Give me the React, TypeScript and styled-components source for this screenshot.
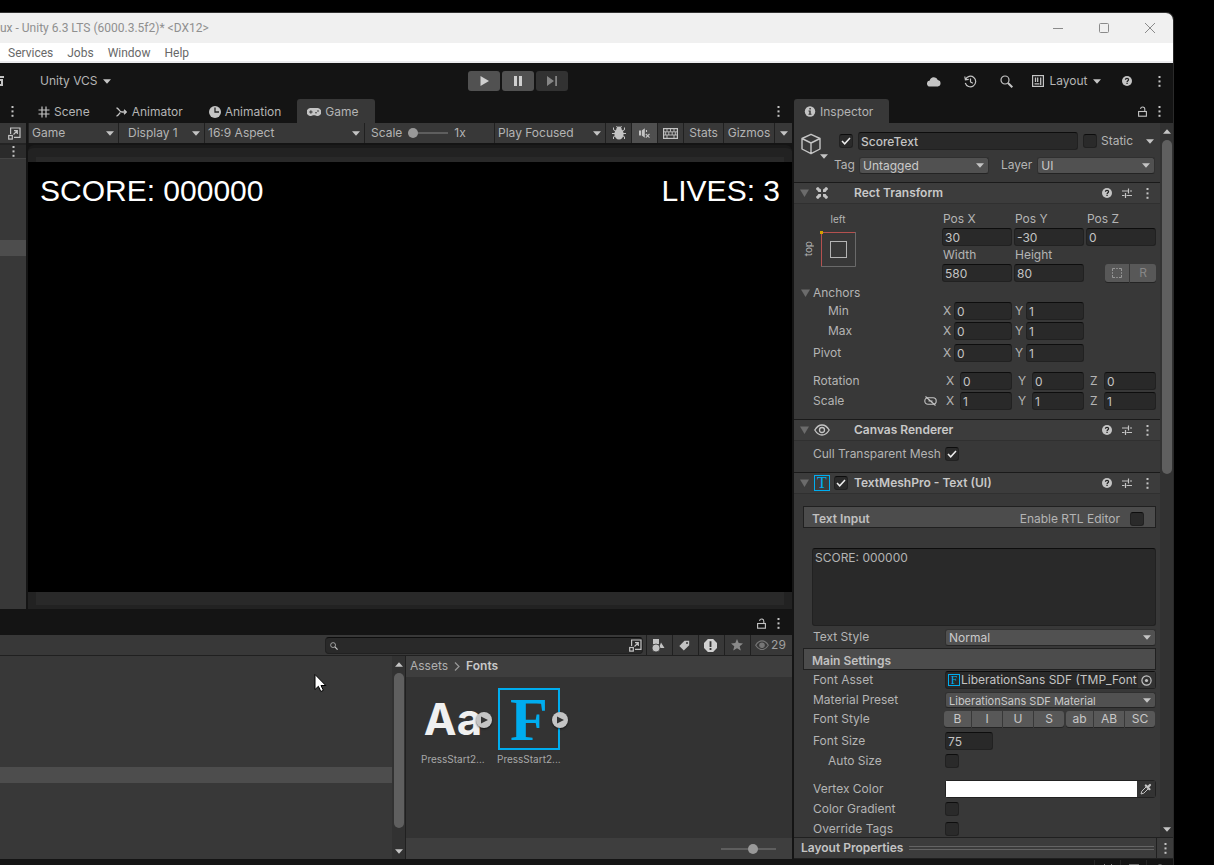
import React from "react";
import styled, { createGlobalStyle, css } from "styled-components";

const Global = createGlobalStyle`
  *, *::before, *::after { box-sizing: border-box; }
  html, body { margin: 0; background: #000; }
  body { font: 12px/16px Inter, "Liberation Sans", sans-serif; color: #b4b4b4; overflow: hidden; }
  button, input, select, textarea { font: inherit; color: inherit; margin: 0; border-radius: 0; }
  svg { display: block; flex: none; }
`;

const C = {
  chrome: "#141414",
  panel: "#383838",
  header: "#3c3c3c",
  field: "#292929",
  line: "#202020",
  button: "#515151",
  blue: "#00adef",
};

/* ---------- window ---------- */

const Desktop = styled.div`
  height: 100vh;
  padding: 12px 40px 0 0;
  display: flex;
`;
const Window = styled.div`
  flex: 1;
  min-width: 0;
  display: flex;
  flex-direction: column;
  border-top: 1px solid #333;
  border-right: 1px solid #2a2a2a;
  border-radius: 0 8px 0 0;
  overflow: hidden;
  background: ${C.chrome};
`;
const TitleBar = styled.header`
  flex: none;
  height: 30px;
  display: flex;
  align-items: center;
  justify-content: space-between;
  background: #f0f0f0;
  color: #8f8f8f;
  font: 12px/16px Roboto, "Noto Sans", sans-serif;
`;
const WindowButtons = styled.div`
  display: flex;
`;
const WindowButton = styled.button`
  width: 46px;
  height: 30px;
  padding: 0;
  display: grid;
  place-items: center;
  border: 0;
  background: none;
`;
const MenuBar = styled.nav`
  flex: none;
  height: 20px;
  padding: 1px 0 0 8px;
  display: flex;
  align-items: center;
  gap: 14px;
  background: #fff;
  border-bottom: 2px solid #ececee;
  font: 12px/16px Roboto, "Noto Sans", sans-serif;
`;
const MenuLink = styled.a`
  color: #686868;
  text-decoration: none;
`;
const Toolbar = styled.div`
  flex: none;
  height: 36px;
  display: grid;
  grid-template-columns: 468px auto 1fr;
  align-items: center;
`;
const ToolbarLeft = styled.div`
  display: flex;
  align-items: center;
  gap: 36px;
`;
const ToolbarRight = styled.div`
  display: flex;
  justify-content: flex-end;
`;
const ToolButton = styled.button<{ $w?: number }>`
  height: 24px;
  width: ${(p) => (p.$w ? `${p.$w}px` : "auto")};
  padding: 0;
  display: flex;
  align-items: center;
  justify-content: center;
  gap: 5px;
  border: 0;
  background: none;
`;
const PlayGroup = styled.div`
  display: flex;
  gap: 2px;
`;
const PlayButton = styled.button<{ $dim?: boolean }>`
  width: 32px;
  height: 20px;
  padding: 0;
  display: grid;
  place-items: center;
  border: 0;
  border-radius: 3px;
  background: ${(p) => (p.$dim ? "#323232" : C.button)};
`;

/* ---------- docks ---------- */

const Body = styled.div`
  flex: 1;
  min-height: 0;
  display: grid;
  grid-template-columns: minmax(0, 1fr) 379px;
  grid-template-rows: minmax(0, 1fr);
`;
const LeftSide = styled.div`
  display: flex;
  flex-direction: column;
  min-height: 0;
  margin-right: 2px;
`;
const TopDocks = styled.div`
  flex: 1;
  min-height: 0;
  display: grid;
  grid-template-columns: 26px minmax(0, 1fr);
  gap: 2px;
`;
const Dock = styled.section`
  min-width: 0;
  min-height: 0;
  display: flex;
  flex-direction: column;
`;
const TabBar = styled.div`
  flex: none;
  height: 24px;
  display: flex;
`;
const Tab = styled.button<{ $active?: boolean }>`
  height: 24px;
  padding: 1px 16px 0 10px;
  display: flex;
  align-items: center;
  gap: 4px;
  border: 0;
  border-radius: 3px 3px 0 0;
  background: ${(p) => (p.$active ? C.panel : "none")};
`;
const TabTools = styled.div`
  margin-left: auto;
  padding-right: 12px;
  display: flex;
  align-items: center;
  gap: 11px;
`;
const IconButton = styled.button`
  padding: 0;
  border: 0;
  background: none;
  display: grid;
  place-items: center;
`;

/* hierarchy strip */
const HierarchyTools = styled.div`
  flex: none;
  height: 22px;
  display: flex;
  align-items: center;
  justify-content: flex-end;
  padding-right: 5px;
  background: ${C.panel};
  border-bottom: 2px solid #232323;
`;
const HierarchyHeader = styled.div`
  flex: none;
  height: 14px;
  display: flex;
  align-items: center;
  justify-content: flex-end;
  padding-right: 11px;
  background: #2b2b2b;
  border-bottom: 1px solid #444;
`;
const HierarchyList = styled.div`
  flex: 1;
  padding-top: 81px;
  background: ${C.panel};
`;
const SelectedRow = styled.div`
  height: 16px;
  background: #4d4d4d;
`;

/* game view */
const GameTools = styled.div`
  flex: none;
  height: 20px;
  display: flex;
  padding-left: 1px;
  background: ${C.line};
  gap: 1px;
`;
const toolCell = css`
  height: 20px;
  background: ${C.panel};
  display: flex;
  align-items: center;
`;
const ScaleCell = styled.label`
  ${toolCell}
  flex: 1;
  padding-left: 6px;
  gap: 6px;
`;
const ToolCell = styled.button<{ $w: number; $on?: boolean }>`
  ${toolCell}
  justify-content: center;
  flex: none;
  width: ${(p) => p.$w}px;
  padding: 0;
  border: 0;
  background: ${(p) => (p.$on ? "#4f4f4f" : C.panel)};
`;
const GameFrame = styled.div`
  flex: 1;
  min-height: 0;
  margin-top: 2px;
  padding: 9px 0 4px;
  display: flex;
  flex-direction: column;
  background: #222;
  border-top: 3px solid #1a1a1a;
  border-radius: 6px 6px 0 0;
`;
const GameRail = styled.div<{ $h: number }>`
  flex: none;
  height: ${(p) => p.$h}px;
  margin: 0 8px;
  background: #292929;
`;
const GameScreen = styled.div`
  flex: 1;
  padding: 10px 12px;
  display: flex;
  justify-content: space-between;
  background: #000;
  color: #fff;
  font: 30px/38px "Liberation Sans", Arial, sans-serif;
`;

/* ---------- form parts ---------- */

const SelectBox = styled.span<{ $w?: number; $flat?: boolean; $h?: number; $pad?: number; $small?: boolean }>`
  display: grid;
  align-items: center;
  width: ${(p) => (p.$w ? `${p.$w}px` : "auto")};
  flex: ${(p) => (p.$w ? "none" : "1")};
  min-width: 0;
  > * { grid-area: 1 / 1; }
  > svg { justify-self: end; margin-right: ${(p) => (p.$flat ? 4 : 5)}px; pointer-events: none; }
  > select {
    appearance: none;
    width: 100%;
    min-width: 0;
    height: ${(p) => p.$h ?? 17}px;
    padding: 0 14px 0 ${(p) => p.$pad ?? 3}px;
    border: 0;
    background: ${(p) => (p.$flat ? C.panel : C.button)};
    font-size: ${(p) => (p.$small ? 11 : 12)}px;
    ${(p) => !p.$flat && css`
      border-radius: 3px;
      border: 1px solid #303030;
      border-bottom-color: #242424;
      color: #cacaca;
    `}
  }
`;
const CheckBox = styled.span`
  display: grid;
  flex: none;
  width: 14px;
  height: 14px;
  > * { grid-area: 1 / 1; }
  > input {
    appearance: none;
    width: 14px;
    height: 14px;
    border: 1px solid #212121;
    border-top-color: #0d0d0d;
    border-radius: 3px;
    background: #2a2a2a;
  }
  > svg { pointer-events: none; visibility: hidden; place-self: center; }
  > input:checked + svg { visibility: visible; }
`;
const TextField = styled.input<{ $w?: number }>`
  width: ${(p) => (p.$w ? `${p.$w}px` : "auto")};
  flex: ${(p) => (p.$w ? "none" : "1")};
  min-width: 0;
  height: 18px;
  padding: 0 2px;
  border: 1px solid #212121;
  border-top-color: #0d0d0d;
  border-radius: 3px;
  background: ${C.field};
  color: #c4c4c4;
`;
const NameField = styled(TextField)`
  font-weight: 500;
`;
const RangeInput = styled.input<{ $w: number; $thumb: number }>`
  appearance: none;
  width: ${(p) => p.$w}px;
  height: 12px;
  background: linear-gradient(#5e5e5e, #5e5e5e) center / 100% 2px no-repeat;
  &::-webkit-slider-thumb {
    appearance: none;
    width: ${(p) => p.$thumb}px;
    height: ${(p) => p.$thumb}px;
    border-radius: 50%;
    background: #999;
  }
`;

/* ---------- project dock ---------- */

const Project = styled.section`
  flex: none;
  height: 250px;
  display: flex;
  flex-direction: column;
`;
const ProjectTabs = styled.div`
  flex: none;
  height: 26px;
  padding-top: 2px;
  display: flex;
`;
const ProjectTools = styled.div`
  flex: none;
  height: 21px;
  display: flex;
  justify-content: flex-end;
  align-items: stretch;
  gap: 1px;
  background: ${C.panel};
  border-bottom: 1px solid ${C.line};
`;
const SearchBox = styled.label`
  width: 318px;
  height: 17px;
  margin: 2px 3px 0 0;
  padding-left: 4px;
  display: flex;
  align-items: center;
  border: 1px solid #212121;
  border-top-color: #0d0d0d;
  border-radius: 4px;
  background: ${C.field};
`;
const SearchInput = styled.input`
  flex: 1;
  min-width: 0;
  padding: 0 4px;
  border: 0;
  outline: 0;
  background: none;
`;
const ProjectTool = styled.button<{ $w: number }>`
  width: ${(p) => p.$w}px;
  padding: 0 2px 0 0;
  display: flex;
  align-items: center;
  justify-content: center;
  gap: 2px;
  border: 0;
  background: ${C.panel};
  box-shadow: -1px 0 ${C.line};
  color: #a0a0a0;
`;
const ProjectBody = styled.div`
  flex: 1;
  min-height: 0;
  display: grid;
  grid-template-columns: 406px minmax(0, 1fr);
`;
const Tree = styled.div`
  position: relative;
  display: flex;
  background: ${C.panel};
  border-right: 1px solid ${C.line};
`;
const TreeRows = styled.div`
  flex: 1;
  padding-top: 111px;
`;
const Pointer = styled.div`
  position: absolute;
  left: 314px;
  top: 17px;
`;
const ScrollBar = styled.div`
  flex: none;
  width: 13px;
  padding: 6px 0 5px;
  display: flex;
  flex-direction: column;
  align-items: center;
  gap: 6px;
  background: #323232;
`;
const ScrollTrack = styled.div`
  flex: 1;
  width: 10px;
`;
const ScrollThumb = styled.div<{ $h: string }>`
  height: ${(p) => p.$h};
  border-radius: 5px;
  background: #5f5f5f;
`;
const Assets = styled.div`
  display: flex;
  flex-direction: column;
  background: #333;
`;
const Breadcrumb = styled.nav`
  flex: none;
  height: 21px;
  padding: 0 0 1px 4px;
  display: flex;
  align-items: center;
  gap: 6px;
  background: #3e3e3e;
`;
const Crumb = styled.a<{ $current?: boolean }>`
  color: ${(p) => (p.$current ? "#c8c8c8" : "#b0b0b0")};
  font-weight: ${(p) => (p.$current ? 600 : 400)};
  text-decoration: none;
`;
const AssetGrid = styled.div`
  flex: 1;
  padding: 11px 15px;
  display: flex;
  gap: 12px;
`;
const AssetTile = styled.div`
  width: 64px;
  color: #a8a8a8;
  font-size: 10px;
  line-height: 14px;
`;
const Thumb = styled.div<{ $framed?: boolean }>`
  position: relative;
  width: 62px;
  height: 62px;
  margin: 0 1px 2px;
  display: grid;
  place-items: center;
  ${(p) => p.$framed
    ? css`
      box-shadow: inset 0 0 0 2px ${C.blue};
      color: ${C.blue};
      font: bold 62px/62px "Liberation Serif", serif;
    `
    : css`
      color: #f0f0f0;
      font: bold 44px/62px Inter, sans-serif;
    `}
`;
const ExpandBadge = styled.button`
  position: absolute;
  right: -8px;
  top: 24px;
  width: 16px;
  height: 16px;
  padding: 0 0 0 1px;
  display: grid;
  place-items: center;
  border: 0;
  border-radius: 50%;
  background: #c4c4c4;
  box-shadow: 0 1px 2px rgba(0, 0, 0, 0.6);
`;
const AssetsFooter = styled.div`
  flex: none;
  height: 21px;
  padding-right: 16px;
  display: flex;
  align-items: center;
  justify-content: flex-end;
  background: #3e3e3e;
`;

/* ---------- inspector ---------- */

const InspectorMain = styled.div`
  flex: 1;
  min-height: 0;
  display: flex;
  background: ${C.panel};
`;
const InspectorScroll = styled.div`
  flex: 1;
  min-width: 0;
  overflow: hidden;
`;
const ObjectHeader = styled.div`
  height: 59px;
  padding: 9px 5px 0 7px;
  display: flex;
`;
const ObjectIcon = styled.div`
  width: 33px;
  flex: none;
  padding-top: 1px;
  display: flex;
  align-items: flex-start;
`;
const ObjectCaret = styled.span`
  margin: 21px 0 0 -1px;
`;
const ObjectRows = styled.div`
  flex: 1;
  min-width: 0;
  display: flex;
  flex-direction: column;
  gap: 6px;
`;
const ObjectLine = styled.div<{ $indent?: boolean }>`
  height: 18px;
  display: flex;
  align-items: center;
  gap: 5px;
  padding-left: ${(p) => (p.$indent ? 5 : 0)}px;
`;
const TagField = styled.span`
  margin-right: 7px;
  display: flex;
  align-items: center;
  gap: 4px;
`;
const StaticGroup = styled.span`
  width: 72px;
  display: flex;
  align-items: center;
  gap: 4px;
  > svg { margin: 0 1px 0 auto; }
`;
const ComponentHeader = styled.header`
  height: 22px;
  padding: 0 3px 0 6px;
  display: flex;
  align-items: center;
  background: ${C.header};
  border-top: 1px solid #1a1a1a;
  border-bottom: 1px solid #303030;
`;
const HeaderIcon = styled.span`
  width: 20px;
  margin-left: 3px;
  display: grid;
  justify-content: center;
`;
const HeaderCheck = styled.span`
  width: 22px;
  height: 14px;
  padding-left: 2px;
`;
const HeaderTitle = styled.h2`
  margin: 0;
  flex: 1;
  font-size: 12px;
  font-weight: 600;
  line-height: 16px;
  color: #c8c8c8;
`;
const HeaderTools = styled.span`
  display: grid;
  grid-template-columns: 20px 20px 20px;
`;
const ComponentBody = styled.div<{ $pad: string }>`
  padding: ${(p) => p.$pad};
`;
const RectTop = styled.div`
  margin-bottom: 2px;
  display: flex;
  justify-content: space-between;
`;
const AnchorPreview = styled.div`
  margin-left: -10px;
  display: grid;
  grid-template-columns: 10px 36px;
  gap: 5px 7px;
  justify-items: center;
  align-items: center;
  align-content: start;
  padding-top: 2px;
  font-size: 10px;
  line-height: 14px;
`;
const AnchorTopLabel = styled.span`
  grid-column: 2;
`;
const AnchorSideLabel = styled.span`
  writing-mode: vertical-rl;
  transform: rotate(180deg);
`;
const AxisGrid = styled.div`
  display: grid;
  grid-template-columns: 70px 70px 70px;
  column-gap: 2px;
`;
const AxisField = styled.label`
  display: block;
  > span { display: block; height: 18px; padding: 1px 0 0 1px; }
  > input { display: block; }
`;
const ToggleGroup = styled.div`
  align-self: end;
  justify-self: end;
  display: flex;
  gap: 1px;
`;
const ToggleButton = styled.button<{ $w: number; $first?: boolean; $last?: boolean; $dim?: boolean }>`
  width: ${(p) => p.$w}px;
  height: ${(p) => (p.$dim ? 18 : 16)}px;
  padding: 0;
  display: grid;
  place-items: center;
  border: 0;
  border-radius: ${(p) => (p.$first ? "3px 0 0 3px" : p.$last ? "0 3px 3px 0" : "0")};
  background: #585858;
  box-shadow: 0 1px #242424;
  color: ${(p) => (p.$dim ? "#868686" : "#c8c8c8")};
`;
const Row = styled.div<{ $after?: number; $indent?: boolean }>`
  height: 18px;
  margin-bottom: ${(p) => p.$after ?? 2}px;
  display: flex;
  align-items: center;
  > :first-child { padding-left: ${(p) => (p.$indent ? 15 : 0)}px; }
`;
const RowLabel = styled.label<{ $w: number }>`
  width: ${(p) => p.$w}px;
  flex: none;
  display: flex;
  align-items: center;
  justify-content: space-between;
  white-space: nowrap;
  > svg { margin-right: 5px; }
`;
const Axis = styled.label<{ $inset?: boolean }>`
  width: 70px;
  flex: none;
  margin-right: 2px;
  display: flex;
  align-items: center;
  > span { width: ${(p) => (p.$inset ? 18 : 12)}px; padding-left: ${(p) => (p.$inset ? 4 : 1)}px; }
`;
const AnchorsRow = styled.button`
  height: 18px;
  margin-left: -12px;
  padding: 0;
  display: flex;
  align-items: center;
  gap: 3px;
  border: 0;
  background: none;
`;
const BoxHeading = styled.div`
  height: 22px;
  margin: 0 0 1px -10px;
  padding: 3px 11px 0 8px;
  display: flex;
  align-items: center;
  justify-content: space-between;
  border: 1px solid #202020;
  background: #4c4c4c;
  > b { font-weight: 600; color: #c0c0c0; }
  > span { display: flex; align-items: center; gap: 10px; }
`;
const TextBox = styled.textarea`
  display: block;
  width: calc(100% + 1px);
  height: 78px;
  margin: 20px 0 2px -1px;
  padding: 1px 2px;
  resize: none;
  border: 1px solid #212121;
  border-top-color: #0d0d0d;
  border-radius: 3px;
  background: ${C.field};
`;
const ObjectField = styled.div`
  flex: 1;
  min-width: 0;
  height: 18px;
  padding-left: 2px;
  display: flex;
  align-items: center;
  gap: 1px;
  border: 1px solid #212121;
  border-top-color: #0d0d0d;
  border-radius: 3px;
  background: ${C.field};
  color: #c4c4c4;
  white-space: nowrap;
`;
const ObjectName = styled.span`
  flex: 1;
`;
const PickerButton = styled(IconButton)`
  width: 18px;
  height: 16px;
  background: #333;
`;
const StyleButtons = styled.div`
  flex: 1;
  margin: 0 1px 0 -1px;
  display: flex;
  justify-content: space-between;
`;
const ColorField = styled.div`
  flex: 1;
  height: 18px;
  display: flex;
  border: 1px solid #212121;
  border-radius: 3px;
`;
const Swatch = styled.button`
  flex: 1;
  padding: 0;
  border: 0;
  background: #fff;
`;
const LayoutFooter = styled.footer`
  flex: none;
  height: 22px;
  display: flex;
  align-items: center;
  gap: 6px;
  padding-left: 7px;
  background: ${C.header};
  border-top: 1px solid ${C.line};
  border-bottom: 1px solid ${C.line};
  > b { font-weight: 600; color: #c4c4c4; }
`;
const Grip = styled.span`
  flex: 1;
  height: 4px;
  border: solid #646464;
  border-width: 1px 0;
`;
const FooterMenu = styled(IconButton)`
  width: 17px;
  height: 20px;
  margin-left: -4px;
  border-left: 1px solid ${C.line};
`;
const StatusBar = styled.div`
  flex: none;
  height: 6px;
  padding-right: 1px;
  display: flex;
  justify-content: flex-end;
  overflow: hidden;
`;
const StatusButton = styled(IconButton)`
  width: 26px;
  height: 20px;
  flex: none;
  margin-top: 1px;
  border-left: 1px solid #262626;
`;

/* ---------- icons ---------- */

const Caret = ({ c = "#c4c4c4" }) => (
  <svg width="8" height="5" viewBox="0 0 8 5"><path d="M0 .3h8L4 4.8z" fill={c} /></svg>
);
const CaretUp = () => (
  <svg width="8" height="5" viewBox="0 0 8 5"><path d="M0 4.8h8L4 .3z" fill="#c4c4c4" /></svg>
);
const Foldout = () => (
  <svg width="9" height="8" viewBox="0 0 9 8"><path d="M0 .5h9L4.5 8z" fill="#6b6b6b" /></svg>
);
const Dots = () => (
  <svg width="3" height="11" viewBox="0 0 3 11" fill="#c4c4c4">
    <rect x=".5" y="0" width="2" height="2" /><rect x=".5" y="4.4" width="2" height="2" /><rect x=".5" y="8.8" width="2" height="2" />
  </svg>
);
const Help = () => (
  <svg width="10" height="10" viewBox="0 0 10 10">
    <circle cx="5" cy="5" r="5" fill="#c4c4c4" />
    <path d="M3.400 3.800c0-1 .7-1.500 1.600-1.500s1.600.5 1.600 1.400C6.600 4.700 5.100 4.800 5.100 6" fill="none" stroke="#222" strokeWidth="1.200" />
    <rect x="4.400" y="6.700" width="1.300" height="1.300" fill="#222" />
  </svg>
);
const Preset = () => (
  <svg width="10" height="10" viewBox="0 0 10 10" stroke="#c4c4c4" strokeWidth="1.200" fill="none">
    <path d="M0 3h6.500M8 3h2M6.500 .5v5M0 7.500h2.500M4.500 7.500H10M3.500 5v5" />
  </svg>
);
const Lock = () => (
  <svg width="9" height="11" viewBox="0 0 9 11" stroke="#c4c4c4" fill="none" strokeWidth="1.100">
    <rect x=".6" y="5.500" width="7.800" height="4.700" /><path d="M6.800 5.500V3.200C6.800 1.800 6 1 4.700 1 3.500 1 2.700 1.700 2.500 2.800" />
  </svg>
);
const Magnifier = ({ s = 13 }) => (
  <svg width={s} height={s} viewBox="0 0 13 13" fill="none" stroke="#c4c4c4">
    <circle cx="5" cy="5" r="4" strokeWidth="1.200" /><path d="M8 8l4.300 4.300" strokeWidth="2" />
  </svg>
);
const Popout = () => (
  <svg width="13" height="13" viewBox="0 0 13 13" fill="none" stroke="#c4c4c4" strokeWidth="1.200">
    <path d="M2.600 7V1h9.400v9.400H6M5.500 7.500L9 4M6 3.700h3.300V7" /><rect x=".7" y="8.500" width="3.600" height="3.600" />
  </svg>
);
const Tick = () => (
  <svg width="10" height="8" viewBox="0 0 10 8"><path d="M1 4l2.700 2.800L9 1" fill="none" stroke="#eee" strokeWidth="1.500" /></svg>
);
const GridIcon = () => (
  <svg width="12" height="12" viewBox="0 0 12 12" stroke="#c4c4c4" strokeWidth="1.200"><path d="M4 .5v11M8 .5v11M.5 4h11M.5 8h11" /></svg>
);
const AnimatorIcon = () => (
  <svg width="12" height="10" viewBox="0 0 12 10" fill="none" stroke="#c4c4c4" strokeWidth="1.300">
    <path d="M.5 1C3 1 3 5 6 5h4M.5 9C2.500 9 3 6.500 4.300 5.400M8 2.700L10.300 5 8 7.300" />
  </svg>
);
const ClockIcon = () => (
  <svg width="12" height="12" viewBox="0 0 12 12"><circle cx="6" cy="6" r="6" fill="#c4c4c4" /><path d="M6 1.500V6h4" stroke="#222" strokeWidth="1.300" fill="none" /></svg>
);
const GamepadIcon = () => (
  <svg width="14" height="8" viewBox="0 0 14 8">
    <path d="M4 0h6a4 4 0 1 1-2 7.200H6A4 4 0 1 1 4 0z" fill="#c4c4c4" />
    <path d="M2.200 4h3.400M3.900 2.300v3.400" stroke="#333" /><circle cx="9" cy="4.800" r=".8" fill="#333" /><circle cx="11" cy="3" r=".8" fill="#333" />
  </svg>
);
const InfoIcon = () => (
  <svg width="12" height="11" viewBox="0 0 12 11"><circle cx="6" cy="5.500" r="5.200" fill="#c4c4c4" /><path d="M5.400 2h1.400v1.500H5.400zM4.500 4.600h2.200v3.200h.8v1h-3v-1h.8V5.600h-.8z" fill="#333" /></svg>
);
const CloudIcon = () => (
  <svg width="14" height="11" viewBox="0 0 14 11"><path d="M3.200 10.500a3 3 0 0 1-.4-6A4.200 4.200 0 0 1 10.800 4a3.300 3.300 0 0 1 0 6.500z" fill="#c4c4c4" /></svg>
);
const HistoryIcon = () => (
  <svg width="13" height="13" viewBox="0 0 13 13" fill="none" stroke="#c4c4c4" strokeWidth="1.200">
    <path d="M1.500 4.500A5.300 5.300 0 1 1 1.300 8M.8 1.500l.6 3.300 3.300-.5M6.500 3.500V7l2.400 1.300" />
  </svg>
);
const LayoutIcon = () => (
  <svg width="12" height="12" viewBox="0 0 12 12" fill="none" stroke="#c4c4c4">
    <rect x=".6" y=".6" width="10.800" height="10.800" strokeWidth="1.200" /><path d="M3.500 2.500V7M2.500 8.800h5M5.700 2.500V7M8.700 2.500v7.500" strokeWidth="1.300" />
  </svg>
);
const ArchiveIcon = () => (
  <svg width="4" height="10" viewBox="0 0 4 10" fill="#c4c4c4"><path d="M0 0h4v2H0zM0 3h3v7H0V8h1V5H0z" /></svg>
);
const BugIcon = () => (
  <svg width="14" height="14" viewBox="0 0 14 14">
    <ellipse cx="7" cy="8" rx="4.600" ry="5.600" fill="#c4c4c4" /><circle cx="7" cy="3" r="2.600" fill="#c4c4c4" />
    <path d="M4.500 0l1 1.500M9.500 0l-1 1.500M3.800 5L1.500 3.800V1.500M10.200 5l2.300-1.200V1.500M0 7.500h14M3.800 9.500l-2.300 1.300V13M10.200 9.500l2.300 1.300V13" stroke="#c4c4c4" fill="none" />
  </svg>
);
const MuteIcon = () => (
  <svg width="11" height="11" viewBox="0 0 11 11">
    <path d="M0 2.500h2v5H0zM2.800 2.500L5.800 .3v9.400l-3-2.200z" fill="#c4c4c4" /><path d="M7.500 2v2M6.800 6l3.700 3.700M10.500 6L6.800 9.700" stroke="#c4c4c4" strokeWidth="1.100" fill="none" />
  </svg>
);
const KeyboardIcon = () => (
  <svg width="15" height="11" viewBox="0 0 15 11" fill="none" stroke="#c4c4c4">
    <rect x=".6" y=".6" width="13.800" height="9.800" strokeWidth="1.200" />
    <path d="M1 3.800h13M1 7h13M4 1v2.500M7.500 1v2.500M11 1v2.500M2.700 4v3M5.800 4v3M9.200 4v3M12.300 4v3M4 7v3M11 7v3" strokeWidth=".9" />
  </svg>
);
const CubeIcon = () => (
  <svg width="20" height="22" viewBox="0 0 20 22" fill="none" stroke="#c4c4c4" strokeWidth="1.400">
    <path d="M10 1.300l9 4.200v10.500l-9 4.700-9-4.700V5.500zM1 5.500l9 4.500 9-4.500M10 10v10.700" strokeLinejoin="round" />
  </svg>
);
const RectIcon = () => (
  <svg width="12" height="12" viewBox="0 0 12 12" fill="#c4c4c4">
    <path d="M2.200 0L4.500 2.400 5 1.500V5H1.500l.9-.5L0 2.200C0 1 1 0 2.200 0zM9.800 0L7.500 2.400 7 1.500V5h3.500l-.9-.5L12 2.200C12 1 11 0 9.800 0zM2.200 12l2.300-2.400.5.900V7H1.500l.9.500L0 9.800C0 11 1 12 2.200 12zM9.800 12L7.500 9.600l-.5.900V7h3.500l-.9.500L12 9.800C12 11 11 12 9.800 12z" />
  </svg>
);
const EyeIcon = ({ c = "#c4c4c4", w = 16, filled = false }) => (
  <svg width={w} height={w * 0.75} viewBox="0 0 16 12" fill="none" stroke={c} strokeWidth="1.300">
    <path d="M.8 6C3 2.300 5.300 1 8 1s5 1.300 7.200 5C13 9.700 10.700 11 8 11S3 9.700.8 6z" /><circle cx="8" cy="6" r="2.500" fill={filled ? c : "none"} />
  </svg>
);
const LinkOffIcon = () => (
  <svg width="13" height="10" viewBox="0 0 13 10" fill="none" stroke="#c4c4c4" strokeWidth="1.100">
    <rect x=".8" y="1.800" width="11.400" height="6.400" rx="3.200" /><path d="M4.500 5h4M1.500.5l10 9" />
  </svg>
);
const AnchorBox = () => (
  <svg width="36" height="36" viewBox="0 0 36 36" fill="none">
    <path d="M35.500 1v34.500H1" stroke="#6a6a6a" /><path d="M1.500 35V1.500H35" stroke="#b5514f" />
    <rect x="10.500" y="10.500" width="16" height="16" stroke="#b4b4b4" /><rect width="3" height="3" fill="#d2a000" />
  </svg>
);
const DashedBox = () => (
  <svg width="10" height="10" viewBox="0 0 10 10" fill="none" stroke="#969696"><path d="M.5 3V.5H3M4.200 .5h1.600M7 .5h2.500V3M9.500 4.200v1.600M9.500 7v2.500H7M5.800 9.500H4.200M3 9.500H.5V7M.5 5.800V4.200" /></svg>
);
const PickerIcon = () => (
  <svg width="11" height="11" viewBox="0 0 11 11"><circle cx="5.500" cy="5.500" r="4.600" fill="none" stroke="#c4c4c4" strokeWidth="1.200" /><circle cx="5.500" cy="5.500" r="1.600" fill="#c4c4c4" /></svg>
);
const DropperIcon = () => (
  <svg width="12" height="12" viewBox="0 0 12 12"><path d="M6.500 3.500L1.800 8.200 1 11l2.800-.8 4.700-4.700" fill="none" stroke="#c4c4c4" /><path d="M5.800 2.500l3.700 3.700M7.500 4.500l2.500-2.500" stroke="#c4c4c4" strokeWidth="2.200" strokeLinecap="round" /></svg>
);
const ShapesIcon = () => (
  <svg width="13" height="13" viewBox="0 0 13 13" fill="#c4c4c4"><path d="M1 0h6v5H1zM9 3.500L12.500 9H7z" /><circle cx="4" cy="9" r="4" stroke={C.panel} strokeWidth=".8" /></svg>
);
const TagIcon = () => (
  <svg width="11" height="11" viewBox="0 0 11 11"><path d="M5.500 .8h4.700v4.500L4.800 10.500.3 6z" fill="#c4c4c4" /><circle cx="8" cy="3" r="1" fill={C.panel} /></svg>
);
const AlertIcon = () => (
  <svg width="13" height="13" viewBox="0 0 14 14"><path d="M4.200 0h5.600L14 4.200v5.600L9.800 14H4.200L0 9.800V4.200z" fill="#d0d0d0" /><path d="M6 2.500h2V8.500H6zM6 9.800h2v2H6z" fill="#333" /></svg>
);
const StarIcon = () => (
  <svg width="12" height="12" viewBox="0 0 12 12"><path d="M6 0l1.700 4.100 4.300.3-3.300 2.800 1.100 4.300L6 9.200l-3.800 2.300 1.100-4.300L0 4.400l4.300-.3z" fill="#8a8a8a" /></svg>
);
const PlayIcon = () => <svg width="9" height="10" viewBox="0 0 9 10"><path d="M.5 0l8.500 5-8.500 5z" fill="#cfcfcf" /></svg>;
const PauseIcon = () => <svg width="8" height="10" viewBox="0 0 8 10"><path d="M0 0h3v10H0zM5 0h3v10H5z" fill="#cfcfcf" /></svg>;
const StepIcon = () => <svg width="10" height="10" viewBox="0 0 10 10"><path d="M0 0l7 5-7 5zM8.200 0H10v10H8.200z" fill="#858585" /></svg>;
const BadgeArrow = () => <svg width="7" height="8" viewBox="0 0 7 8"><path d="M0 .5L7 4 0 7.500z" fill="#333" /></svg>;
const CursorIcon = () => (
  <svg width="13" height="20" viewBox="0 0 13 20"><path d="M1 1.500v15l3.400-3.200 2.400 5.200 2.600-1.200L7 12.500h4.800z" fill="#fff" stroke="#000" /></svg>
);
const LetterIcon = styled.span<{ $s: number }>`
  width: ${(p) => p.$s}px;
  height: ${(p) => p.$s}px;
  flex: none;
  display: grid;
  place-items: center;
  border: 1px solid ${C.blue};
  color: ${C.blue};
  font: ${(p) => p.$s}px/${(p) => p.$s - 2}px "Liberation Serif", serif;
`;

/* ---------- pieces ---------- */

type SelectProps = { label: string; value: string; w?: number; flat?: boolean; h?: number; pad?: number; small?: boolean };
const Select = ({ label, value, w, flat, h, pad, small }: SelectProps) => (
  <SelectBox $w={w} $flat={flat} $h={h} $pad={pad} $small={small}>
    <select aria-label={label} defaultValue={value}><option>{value}</option></select>
    <Caret />
  </SelectBox>
);
const Check = ({ label, id, on }: { label?: string; id?: string; on?: boolean }) => (
  <CheckBox><input type="checkbox" id={id} aria-label={label} defaultChecked={on} /><Tick /></CheckBox>
);
const Component = ({ title, icon, check }: { title: string; icon: React.ReactNode; check?: React.ReactNode }) => (
  <ComponentHeader>
    <Foldout />
    <HeaderIcon>{icon}</HeaderIcon>
    <HeaderCheck>{check}</HeaderCheck>
    <HeaderTitle>{title}</HeaderTitle>
    <HeaderTools>
      <IconButton aria-label="Help"><Help /></IconButton>
      <IconButton aria-label="Presets"><Preset /></IconButton>
      <IconButton aria-label="More"><Dots /></IconButton>
    </HeaderTools>
  </ComponentHeader>
);
const Vector = ({ label, values, indent, after, inset, link }: {
  label: string; values: string[]; indent?: boolean; after?: number; inset?: boolean; link?: boolean;
}) => (
  <Row $indent={indent} $after={after}>
    <RowLabel as="span" $w={129}>{label}{link && <LinkOffIcon />}</RowLabel>
    {values.map((v, i) => (
      <Axis key={i} $inset={inset}><span>{"XYZ"[i]}</span><TextField defaultValue={v} aria-label={`${label} ${"XYZ"[i]}`} /></Axis>
    ))}
  </Row>
);

export default function App() {
  return (
    <Desktop>
      <Global />
      <Window>
        <TitleBar>
          <span>ux - Unity 6.3 LTS (6000.3.5f2)* &lt;DX12&gt;</span>
          <WindowButtons>
            <WindowButton aria-label="Minimize"><svg width="10" height="10"><path d="M0 5.500h10" stroke="#8a8a8a" /></svg></WindowButton>
            <WindowButton aria-label="Maximize"><svg width="10" height="10"><rect x=".5" y=".5" width="9" height="9" rx="1" fill="none" stroke="#8a8a8a" /></svg></WindowButton>
            <WindowButton aria-label="Close"><svg width="10" height="10"><path d="M0 0l10 10M10 0L0 10" stroke="#8a8a8a" /></svg></WindowButton>
          </WindowButtons>
        </TitleBar>
        <MenuBar>
          {["Services", "Jobs", "Window", "Help"].map((m) => <MenuLink href="#" key={m}>{m}</MenuLink>)}
        </MenuBar>
        <Toolbar>
          <ToolbarLeft>
            <ArchiveIcon />
            <ToolButton>Unity VCS <Caret /></ToolButton>
          </ToolbarLeft>
          <PlayGroup>
            <PlayButton aria-label="Play"><PlayIcon /></PlayButton>
            <PlayButton aria-label="Pause"><PauseIcon /></PlayButton>
            <PlayButton aria-label="Step" $dim><StepIcon /></PlayButton>
          </PlayGroup>
          <ToolbarRight>
            <ToolButton $w={36} aria-label="Cloud"><CloudIcon /></ToolButton>
            <ToolButton $w={36} aria-label="Undo history"><HistoryIcon /></ToolButton>
            <ToolButton $w={36} aria-label="Search"><Magnifier /></ToolButton>
            <ToolButton $w={85}><LayoutIcon />Layout <Caret /></ToolButton>
            <ToolButton $w={36} aria-label="Help"><Help /></ToolButton>
            <ToolButton $w={28} aria-label="More"><Dots /></ToolButton>
          </ToolbarRight>
        </Toolbar>

        <Body>
          <LeftSide>
            <TopDocks>
              <Dock>
                <TabBar><TabTools><IconButton aria-label="Hierarchy menu"><Dots /></IconButton></TabTools></TabBar>
                <HierarchyTools><IconButton aria-label="Open search"><Popout /></IconButton></HierarchyTools>
                <HierarchyHeader><IconButton aria-label="Scene menu"><Dots /></IconButton></HierarchyHeader>
                <HierarchyList><SelectedRow /></HierarchyList>
              </Dock>
              <Dock>
                <TabBar>
                  <Tab><GridIcon />Scene</Tab>
                  <Tab><AnimatorIcon />Animator</Tab>
                  <Tab><ClockIcon />Animation</Tab>
                  <Tab $active><GamepadIcon />Game</Tab>
                  <TabTools><IconButton aria-label="Game menu"><Dots /></IconButton></TabTools>
                </TabBar>
                <GameTools>
                  <Select label="View" value="Game" w={89} flat h={20} />
                  <Select label="Display" value="Display 1" w={85} flat h={20} pad={9} />
                  <Select label="Aspect" value="16:9 Aspect" w={159} flat h={20} />
                  <ScaleCell>Scale<RangeInput type="range" $w={40} $thumb={10} defaultValue={0} />1x</ScaleCell>
                  <Select label="Play mode" value="Play Focused" w={110} flat h={20} />
                  <ToolCell $w={25} aria-label="Debug"><BugIcon /></ToolCell>
                  <ToolCell $w={25} $on aria-label="Mute"><MuteIcon /></ToolCell>
                  <ToolCell $w={25} aria-label="Shortcuts"><KeyboardIcon /></ToolCell>
                  <ToolCell $w={39}>Stats</ToolCell>
                  <ToolCell $w={50}>Gizmos</ToolCell>
                  <ToolCell $w={17} aria-label="Gizmo options"><Caret /></ToolCell>
                </GameTools>
                <GameFrame>
                  <GameRail $h={5} />
                  <GameScreen><span>SCORE: 000000</span><span>LIVES: 3</span></GameScreen>
                  <GameRail $h={13} />
                </GameFrame>
              </Dock>
            </TopDocks>

            <Project>
              <ProjectTabs>
                <TabTools>
                  <IconButton aria-label="Lock"><Lock /></IconButton><IconButton aria-label="Project menu"><Dots /></IconButton>
                </TabTools>
              </ProjectTabs>
              <ProjectTools>
                <SearchBox><Magnifier s={8} /><SearchInput aria-label="Search assets" /><IconButton aria-label="Open search window"><Popout /></IconButton></SearchBox>
                <ProjectTool $w={25} aria-label="Filter by type"><ShapesIcon /></ProjectTool>
                <ProjectTool $w={25} aria-label="Filter by label"><TagIcon /></ProjectTool>
                <ProjectTool $w={25} aria-label="Filter by log"><AlertIcon /></ProjectTool>
                <ProjectTool $w={25} aria-label="Favourite"><StarIcon /></ProjectTool>
                <ProjectTool $w={41} aria-label="Hidden packages"><EyeIcon c="#777" w={14} filled />29</ProjectTool>
              </ProjectTools>
              <ProjectBody>
                <Tree>
                  <TreeRows><SelectedRow /></TreeRows>
                  <ScrollBar>
                    <CaretUp />
                    <ScrollTrack><ScrollThumb $h="91%" /></ScrollTrack>
                    <Caret />
                  </ScrollBar>
                  <Pointer><CursorIcon /></Pointer>
                </Tree>
                <Assets>
                  <Breadcrumb>
                    <Crumb href="#">Assets</Crumb>
                    <svg width="6" height="9" viewBox="0 0 6 9"><path d="M1 .5l4 4-4 4" fill="none" stroke="#999" strokeWidth="1.200" /></svg>
                    <Crumb href="#" $current>Fonts</Crumb>
                  </Breadcrumb>
                  <AssetGrid>
                    <AssetTile><Thumb>Aa<ExpandBadge aria-label="Expand"><BadgeArrow /></ExpandBadge></Thumb>PressStart2...</AssetTile>
                    <AssetTile><Thumb $framed>F<ExpandBadge aria-label="Expand"><BadgeArrow /></ExpandBadge></Thumb>PressStart2...</AssetTile>
                  </AssetGrid>
                  <AssetsFooter><RangeInput type="range" aria-label="Icon size" $w={55} $thumb={10} defaultValue={60} /></AssetsFooter>
                </Assets>
              </ProjectBody>
            </Project>
          </LeftSide>

          <Dock>
            <TabBar>
              <Tab $active><InfoIcon />Inspector</Tab>
              <TabTools>
                <IconButton aria-label="Lock"><Lock /></IconButton><IconButton aria-label="Inspector menu"><Dots /></IconButton>
              </TabTools>
            </TabBar>
            <InspectorMain>
              <InspectorScroll>
                <ObjectHeader>
                  <ObjectIcon><CubeIcon /><ObjectCaret><Caret /></ObjectCaret></ObjectIcon>
                  <ObjectRows>
                    <ObjectLine $indent>
                      <Check label="Active" on />
                      <NameField aria-label="Name" defaultValue="ScoreText" />
                      <StaticGroup><Check id="static" /><label htmlFor="static">Static</label><Caret /></StaticGroup>
                    </ObjectLine>
                    <ObjectLine>
                      <TagField>Tag<Select label="Tag" value="Untagged" w={130} /></TagField>
                      <span>Layer</span><Select label="Layer" value="UI" />
                    </ObjectLine>
                  </ObjectRows>
                </ObjectHeader>

                <Component title="Rect Transform" icon={<RectIcon />} />
                <ComponentBody $pad="6px 4px 9px 19px">
                  <RectTop>
                    <AnchorPreview>
                      <AnchorTopLabel>left</AnchorTopLabel>
                      <AnchorSideLabel>top</AnchorSideLabel>
                      <AnchorBox />
                    </AnchorPreview>
                    <AxisGrid>
                      {[["Pos X", "30"], ["Pos Y", "-30"], ["Pos Z", "0"], ["Width", "580"], ["Height", "80"]].map(([l, v]) => (
                        <AxisField key={l}><span>{l}</span><TextField $w={70} defaultValue={v} /></AxisField>
                      ))}
                      <ToggleGroup>
                        <ToggleButton $w={24} $first $dim aria-label="Blueprint mode"><DashedBox /></ToggleButton>
                        <ToggleButton $w={26} $last $dim>R</ToggleButton>
                      </ToggleGroup>
                    </AxisGrid>
                  </RectTop>
                  <AnchorsRow><Foldout />Anchors</AnchorsRow>
                  <Vector label="Min" values={["0", "1"]} indent />
                  <Vector label="Max" values={["0", "1"]} indent after={4} />
                  <Vector label="Pivot" values={["0", "1"]} after={10} />
                  <Vector label="Rotation" values={["0", "0", "0"]} inset />
                  <Vector label="Scale" values={["1", "1", "1"]} inset link after={0} />
                </ComponentBody>

                <Component title="Canvas Renderer" icon={<EyeIcon />} />
                <ComponentBody $pad="4px 4px 9px 19px">
                  <Row $after={0}><RowLabel $w={132} htmlFor="cull">Cull Transparent Mesh</RowLabel><Check id="cull" on /></Row>
                </ComponentBody>

                <Component title="TextMeshPro - Text (UI)" icon={<LetterIcon $s={16}>T</LetterIcon>} check={<Check label="Enabled" on />} />
                <ComponentBody $pad="12px 4px 0 19px">
                  <BoxHeading><b>Text Input</b><span><label htmlFor="rtl">Enable RTL Editor</label><Check id="rtl" /></span></BoxHeading>
                  <TextBox aria-label="Text" defaultValue="SCORE: 000000" />
                  <Row><RowLabel as="span" $w={132}>Text Style</RowLabel><Select label="Text Style" value="Normal" /></Row>
                  <BoxHeading><b>Main Settings</b></BoxHeading>
                  <Row>
                    <RowLabel as="span" $w={132}>Font Asset</RowLabel>
                    <ObjectField>
                      <LetterIcon $s={12}>F</LetterIcon>
                      <ObjectName>LiberationSans SDF (TMP_Font</ObjectName>
                      <PickerButton aria-label="Pick font asset"><PickerIcon /></PickerButton>
                    </ObjectField>
                  </Row>
                  <Row $after={1}><RowLabel as="span" $w={132}>Material Preset</RowLabel><Select label="Material Preset" value="LiberationSans SDF Material" h={16} small /></Row>
                  <Row $after={4}>
                    <RowLabel as="span" $w={132}>Font Style</RowLabel>
                    <StyleButtons>
                      <ToggleGroup>
                        <ToggleButton $w={27} $first>B</ToggleButton>
                        <ToggleButton $w={30}>I</ToggleButton>
                        <ToggleButton $w={30}>U</ToggleButton>
                        <ToggleButton $w={30} $last>S</ToggleButton>
                      </ToggleGroup>
                      <ToggleGroup>
                        <ToggleButton $w={27} $first>ab</ToggleButton>
                        <ToggleButton $w={30}>AB</ToggleButton>
                        <ToggleButton $w={30} $last>SC</ToggleButton>
                      </ToggleGroup>
                    </StyleButtons>
                  </Row>
                  <Row><RowLabel $w={132} htmlFor="size">Font Size</RowLabel><TextField id="size" $w={48} defaultValue="75" /></Row>
                  <Row $indent $after={10}><RowLabel $w={132} htmlFor="auto">Auto Size</RowLabel><Check id="auto" /></Row>
                  <Row>
                    <RowLabel as="span" $w={132}>Vertex Color</RowLabel>
                    <ColorField><Swatch aria-label="Vertex Color" /><PickerButton aria-label="Pick color"><DropperIcon /></PickerButton></ColorField>
                  </Row>
                  <Row><RowLabel $w={132} htmlFor="gradient">Color Gradient</RowLabel><Check id="gradient" /></Row>
                  <Row $after={0}><RowLabel $w={132} htmlFor="tags">Override Tags</RowLabel><Check id="tags" /></Row>
                </ComponentBody>
              </InspectorScroll>
              <ScrollBar>
                <CaretUp />
                <ScrollTrack><ScrollThumb $h="49%" /></ScrollTrack>
                <Caret />
              </ScrollBar>
            </InspectorMain>
            <LayoutFooter>
              <b>Layout Properties</b><Grip /><FooterMenu aria-label="Layout menu"><Dots /></FooterMenu>
            </LayoutFooter>
          </Dock>
        </Body>
        <StatusBar>
          <StatusButton aria-label="Debugger"><svg width="12" height="12" viewBox="0 0 12 12" fill="none" stroke="#c4c4c4"><path d="M1 2l2-1.500M4 1v3M6 1v3M9 .5l2 1.500" /><rect x="3" y="3" width="6" height="8" /></svg></StatusButton>
          <StatusButton aria-label="Cache server"><svg width="12" height="12" viewBox="0 0 12 12" fill="none" stroke="#c4c4c4"><rect x="1.500" y="1" width="9" height="9" /></svg></StatusButton>
          <StatusButton aria-label="Progress"><svg width="12" height="12" viewBox="0 0 12 12"><circle cx="6" cy="6" r="5" fill="none" stroke="#c4c4c4" /></svg></StatusButton>
        </StatusBar>
      </Window>
    </Desktop>
  );
}
